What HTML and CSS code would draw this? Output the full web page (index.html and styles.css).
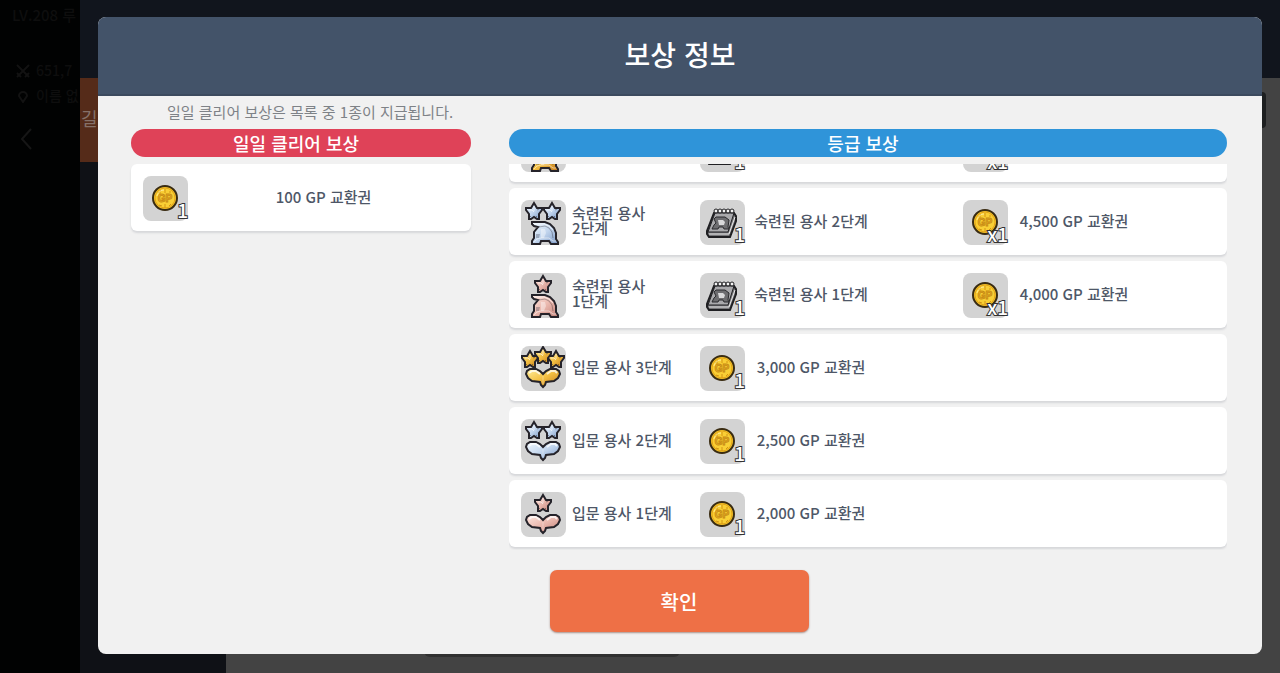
FILE: index.html
```html
<!DOCTYPE html>
<html lang="ko">
<head>
  <meta charset="UTF-8" />
  <meta name="viewport" content="width=device-width, initial-scale=1.0"/>
  <title>보상 정보</title>
  <link rel="stylesheet" href="styles.css">
</head>
<body>
  <!-- icons -->
  <svg class="sprites" aria-hidden="true">
    <defs>
      <linearGradient id="gold" x1="0" y1="0" x2="1" y2="1">
        <stop offset="0" stop-color="#fff0a0"/><stop offset="0.5" stop-color="#f3bf42"/><stop offset="1" stop-color="#c47a1c"/>
      </linearGradient>
      <linearGradient id="silver" x1="0" y1="0" x2="1" y2="1">
        <stop offset="0" stop-color="#f4faff"/><stop offset="0.5" stop-color="#c3d6ee"/><stop offset="1" stop-color="#7b99c6"/>
      </linearGradient>
      <linearGradient id="bronze" x1="0" y1="0" x2="1" y2="1">
        <stop offset="0" stop-color="#ffe9e2"/><stop offset="0.5" stop-color="#eab8ae"/><stop offset="1" stop-color="#c07f76"/>
      </linearGradient>
    </defs>
    <symbol id="star" viewBox="0 0 20 20">
      <path d="M10 2l3 5h5v2l-3 4v5h-2l-3-2-3 2H5v-5L2 9V7h5z" stroke="#25232a" stroke-width="2"/>
      <path d="M13 9l2-1M12 15l1 1M7 15l-1 1" fill="none" stroke="#25232a" stroke-opacity="0.45"/>
      <path d="M10 5v5M5 9h3l2 2" fill="none" stroke="#fff" stroke-opacity="0.6"/>
    </symbol>
    <symbol id="helmet" viewBox="0 0 45 45">
      <path d="M11 22h13l5 2 4 4 2 5v6l2 3v2h-7l-2-3h-8l-1 3h-8v-3l2-3v-6l4-5-4-1-2-2z" stroke="#25232a" stroke-width="2"/>
      <path d="M18 27l6-1 4 2 3 4 1 6" fill="none" stroke="#25232a" stroke-opacity="0.35"/>
      <path d="M13 24h10l5 2 4 4" fill="none" stroke="#fff" stroke-opacity="0.6"/>
      <path d="M20 29h4l1 4-2 5h-3z" fill="#fff" fill-opacity="0.4"/>
      <path d="M15 34h4l-1 4h-3z" fill="#34384a" fill-opacity="0.3"/>
      <path d="M13 42l3-3 4-1h8l4 3h3" fill="none" stroke="#fff" stroke-opacity="0.5"/>
    </symbol>
    <symbol id="sprout" viewBox="0 0 45 45">
      <path d="M22 28l-3-3-4-2H9l-3 2-1 3 2 4 4 3 8 1 1 3 2 2 2-2 1-3 8-1 4-3 2-4-1-3-3-2h-6l-4 2z" stroke="#25232a" stroke-width="2"/>
      <path d="M8 27l3-2h4l4 3M26 28l4-3h4l2 2" fill="none" stroke="#fff" stroke-opacity="0.75" stroke-width="2"/>
      <path d="M22 30v8" fill="none" stroke="#fff" stroke-opacity="0.35"/>
    </symbol>
    <symbol id="coin" viewBox="0 0 45 45">
      <circle cx="22" cy="22" r="12" fill="#f6c62a" stroke="#3a2c12" stroke-width="2"/>
      <circle cx="22" cy="22" r="10" fill="#f9cf35" stroke="#e3a51a"/>
      <path d="M15 17l3-3M17 15v3M22 13v4M27 15v2M16 29l3 1M22 28v4M26 30l2-2" fill="none" stroke="#d39414" stroke-width="1"/>
      <path d="M14 20c1-4 4-6 7-6" fill="none" stroke="#fff0a0"/>
      <text class="coin-text" x="22" y="26">GP</text>
    </symbol>
    <symbol id="book" viewBox="0 0 45 45">
      <path d="M14 13h20l2 3v5l-6 16H9l-2-3v-3z" fill="#77777a" stroke="#1f1f22" stroke-width="2"/>
      <path d="M15 13h19l-6 19H8z" fill="#a9a9ac" stroke="#1f1f22"/>
      <path d="M9 34h20l6-17" fill="none" stroke="#eee"/>
      <path d="M14 19l2-2h9l4 3-1 7 1 2h-5l-1-2h-4l-1 2h-6l2-4 2-2z" fill="#6d6d70" stroke="#2b2b2e"/>
      <path d="M18 20h5l2 2-1 3h-5z" fill="#d8d8da"/>
      <g fill="#f4f4f4" stroke="#1f1f22">
        <circle cx="16" cy="11" r="2"/><circle cx="20" cy="11" r="2"/><circle cx="24" cy="11" r="2"/><circle cx="28" cy="11" r="2"/><circle cx="32" cy="11" r="2"/>
      </g>
    </symbol>
  </svg>

  <!-- game screen behind the popup -->
  <div class="game" aria-hidden="true">
    <div class="scene">
      <div class="level">LV.208 루</div>
      <div class="stat">
        <svg viewBox="0 0 14 14"><path d="M1 1l12 12M13 1L1 13M1 9l4 4M13 9l-4 4" fill="none" stroke="#121212" stroke-width="2"/></svg>
        651,7
      </div>
      <div class="stat">
        <svg viewBox="0 0 14 14"><path d="M7 13L3 7a4 4 0 1 1 8 0z" fill="none" stroke="#121212" stroke-width="2"/></svg>
        이름 없
      </div>
      <svg class="back" viewBox="0 0 12 22"><path d="M11 1L2 11l9 10" fill="none" stroke="#161616" stroke-width="2"/></svg>
    </div>
    <div class="guild">
      <div class="topbar"></div>
      <div class="guild-main">
        <div class="sidenav"><div class="tab">길</div></div>
        <div class="content">
          <div class="search"></div>
          <div class="panel"></div>
        </div>
      </div>
    </div>
  </div>

  <div class="overlay">
    <div class="modal" role="dialog" aria-labelledby="title">
      <div class="header">
        <h1 id="title">보상 정보</h1>
      </div>
      <div class="body">
        <p class="note">일일 클리어 보상은 목록 중 1종이 지급됩니다.</p>
        <div class="columns">
          <section>
            <h2 class="pill red">일일 클리어 보상</h2>
            <div class="card daily">
              <div class="tile"><svg><use href="#coin"/></svg><span class="count">1</span></div>
              <div class="name">100 GP 교환권</div>
            </div>
          </section>
          <section>
            <h2 class="pill blue">등급 보상</h2>
            <ul class="list" id="gradeList">
              <li class="card">
                <div class="grade">
                  <div class="tile gold"><svg viewBox="0 0 45 45"><use href="#star" x="-1" y="3" width="20" height="20"/><use href="#star" x="25" y="3" width="20" height="20"/><use href="#star" x="12" y="-2" width="20" height="20"/><use href="#helmet"/></svg></div>
                  <div class="label">숙련된 용사 3단계</div>
                </div>
                <div class="reward">
                  <div class="tile"><svg><use href="#book"/></svg><span class="count">1</span></div>
                  <div class="name">숙련된 용사 3단계</div>
                </div>
                <div class="reward">
                  <div class="tile"><svg><use href="#coin"/></svg><span class="count">x1</span></div>
                  <div class="name">5,000 GP 교환권</div>
                </div>
              </li>
              <li class="card">
                <div class="grade">
                  <div class="tile silver"><svg viewBox="0 0 45 45"><use href="#star" x="3" y="1" width="20" height="20"/><use href="#star" x="21" y="1" width="20" height="20"/><use href="#helmet"/></svg></div>
                  <div class="label">숙련된 용사 2단계</div>
                </div>
                <div class="reward">
                  <div class="tile"><svg><use href="#book"/></svg><span class="count">1</span></div>
                  <div class="name">숙련된 용사 2단계</div>
                </div>
                <div class="reward">
                  <div class="tile"><svg><use href="#coin"/></svg><span class="count">x1</span></div>
                  <div class="name">4,500 GP 교환권</div>
                </div>
              </li>
              <li class="card">
                <div class="grade">
                  <div class="tile bronze"><svg viewBox="0 0 45 45"><use href="#star" x="12" y="1" width="20" height="20"/><use href="#helmet"/></svg></div>
                  <div class="label">숙련된 용사 1단계</div>
                </div>
                <div class="reward">
                  <div class="tile"><svg><use href="#book"/></svg><span class="count">1</span></div>
                  <div class="name">숙련된 용사 1단계</div>
                </div>
                <div class="reward">
                  <div class="tile"><svg><use href="#coin"/></svg><span class="count">x1</span></div>
                  <div class="name">4,000 GP 교환권</div>
                </div>
              </li>
              <li class="card">
                <div class="grade">
                  <div class="tile gold"><svg viewBox="0 0 45 45"><use href="#sprout"/><use href="#star" x="-1" y="3" width="20" height="20"/><use href="#star" x="25" y="3" width="20" height="20"/><use href="#star" x="12" y="-1" width="20" height="20"/></svg></div>
                  <div class="label">입문 용사 3단계</div>
                </div>
                <div class="reward">
                  <div class="tile"><svg><use href="#coin"/></svg><span class="count">1</span></div>
                  <div class="name">3,000 GP 교환권</div>
                </div>
              </li>
              <li class="card">
                <div class="grade">
                  <div class="tile silver"><svg viewBox="0 0 45 45"><use href="#sprout"/><use href="#star" x="3" y="1" width="20" height="20"/><use href="#star" x="21" y="1" width="20" height="20"/></svg></div>
                  <div class="label">입문 용사 2단계</div>
                </div>
                <div class="reward">
                  <div class="tile"><svg><use href="#coin"/></svg><span class="count">1</span></div>
                  <div class="name">2,500 GP 교환권</div>
                </div>
              </li>
              <li class="card">
                <div class="grade">
                  <div class="tile bronze"><svg viewBox="0 0 45 45"><use href="#sprout"/><use href="#star" x="12" y="1" width="20" height="20"/></svg></div>
                  <div class="label">입문 용사 1단계</div>
                </div>
                <div class="reward">
                  <div class="tile"><svg><use href="#coin"/></svg><span class="count">1</span></div>
                  <div class="name">2,000 GP 교환권</div>
                </div>
              </li>
            </ul>
          </section>
        </div>
        <button type="button" class="confirm-btn">확인</button>
      </div>
    </div>
  </div>

  <script>
    // open on the lowest grades
    const gradeList = document.getElementById('gradeList');
    gradeList.scrollTop = gradeList.scrollHeight;
  </script>
</body>
</html>
```

FILE: styles.css
```css
* {
  box-sizing: border-box;
}
body {
  margin: 0;
  position: relative;
  min-height: 100vh;
  font-family: "Noto Sans CJK KR", "Noto Sans", sans-serif;
  font-size: 15px;
  font-weight: 500;
  color: #4e5767;
  background-color: #020202;
}
h1, h2, p, ul {
  margin: 0;
  padding: 0;
}
.sprites {
  position: absolute;
  width: 0;
  height: 0;
}

/* game screen */
.game {
  position: absolute;
  inset: 0;
  display: flex;
  overflow: hidden;
}
.scene {
  width: 80px;
  padding: 4px 0 0 12px;
  overflow: hidden;
  white-space: nowrap;
  color: #0e0e0e;
  background-color: #010202;
}
.level {
  margin-bottom: 32px;
  font-size: 15px;
  line-height: 22px;
}
.stat {
  display: flex;
  align-items: center;
  gap: 6px;
  padding-left: 4px;
  font-size: 14px;
  line-height: 25px;
}
.stat svg {
  flex-shrink: 0;
  width: 14px;
  height: 14px;
}
.back {
  display: block;
  width: 12px;
  height: 22px;
  margin: 20px 0 0 8px;
}
.guild {
  flex: 1;
  display: flex;
  flex-direction: column;
}
.topbar {
  height: 78px;
  background-color: #11151d;
}
.guild-main {
  flex: 1;
  display: flex;
}
.sidenav {
  width: 146px;
  background-color: #0f1116;
}
.tab {
  height: 84px;
  padding-left: 1px;
  font-size: 18px;
  font-weight: 400;
  line-height: 80px;
  color: #857068;
  background-color: #552b19;
}
.content {
  flex: 1;
  display: flex;
  flex-direction: column;
  justify-content: space-between;
  padding: 14px 14px 16px 198px;
  background-color: #434343;
}
.search {
  height: 36px;
  border-radius: 4px;
  background-color: #1d1f20;
}
.panel {
  width: 256px;
  height: 60px;
  border-radius: 6px;
  background-color: #313131;
}

/* popup */
.overlay {
  position: relative;
  padding: 17px 18px 19px 98px;
}
.modal {
  border-radius: 8px;
  overflow: hidden;
  background-color: #f1f1f1;
}
.header {
  padding: 17px 0 20px;
  text-align: center;
  color: #fff;
  background-color: #435369;
  border-bottom: 2px solid #3c4a5e;
}
.header h1 {
  font-size: 28px;
  font-weight: 500;
  line-height: 40px;
}
.body {
  padding: 0 35px 22px 33px;
}
.note {
  padding: 0 0 2px 36px;
  font-weight: 400;
  line-height: 31px;
  color: #7e8287;
}
.columns {
  display: grid;
  grid-template-columns: 340fr 718fr;
  gap: 38px;
}
.pill {
  margin-bottom: 7px;
  padding-right: 10px;
  border-radius: 14px;
  font-size: 18px;
  font-weight: 500;
  line-height: 28px;
  text-align: center;
  color: #fff;
}
.red {
  background-color: #df4258;
}
.blue {
  background-color: #2f94d9;
}
.list {
  display: flex;
  flex-direction: column;
  gap: 6px;
  height: 386px;
  padding-bottom: 3px;
  overflow-y: auto;
  scrollbar-width: none;
  list-style: none;
}
.card {
  display: grid;
  grid-template-columns: 179fr 263fr 252fr;
  align-items: center;
  flex-shrink: 0;
  height: 67px;
  padding: 0 12px;
  border-radius: 6px;
  background-color: #fff;
  box-shadow: 0 2px 2px #d6d7da;
}
.daily {
  display: flex;
}
.daily .name {
  flex: 1;
}
.grade, .reward {
  display: flex;
  align-items: center;
}
.label {
  width: 108px;
  padding: 0 0 3px 6px;
  line-height: 15px;
  word-break: keep-all;
}
.name {
  width: 132px;
  padding-bottom: 2px;
  text-align: center;
}
.tile {
  position: relative;
  flex-shrink: 0;
  width: 45px;
  height: 45px;
  margin-top: 1px;
  border-radius: 8px;
  background-color: #d3d3d3;
}
.tile svg {
  display: block;
  width: 45px;
  height: 45px;
}
.gold {
  fill: url(#gold);
}
.silver {
  fill: url(#silver);
}
.bronze {
  fill: url(#bronze);
}
.coin-text {
  font-family: "Liberation Sans", Arial, sans-serif;
  font-size: 10px;
  font-weight: bold;
  text-anchor: middle;
  fill: #f9cf35;
  stroke: #c98c14;
  stroke-width: 1px;
}
.count {
  position: absolute;
  right: 0;
  bottom: -1px;
  font-size: 19px;
  line-height: 24px;
  color: #fff;
  -webkit-text-stroke: 2px #333;
  paint-order: stroke fill;
}
.confirm-btn {
  display: block;
  width: 259px;
  height: 62px;
  margin: 20px auto 0;
  border: none;
  border-radius: 7px;
  font-family: inherit;
  font-size: 20px;
  font-weight: 500;
  color: #fff;
  background-color: #ee7046;
  box-shadow: 0 1px 2px #a9908a;
  cursor: pointer;
}
.confirm-btn:hover {
  background-color: #e2643b;
}
```
